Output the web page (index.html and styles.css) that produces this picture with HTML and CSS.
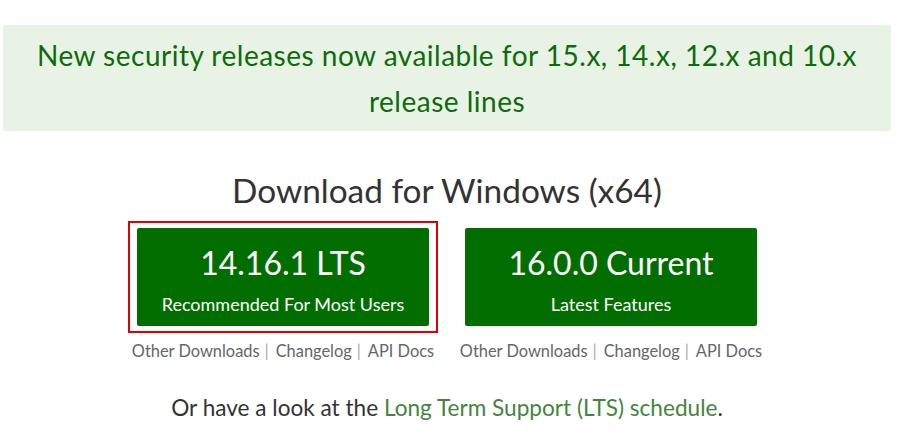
FILE: index.html
```html
<!DOCTYPE html>
<html>
<head>
<meta charset="utf-8">
<link rel="stylesheet" href="styles.css">
</head>
<body>
<div class="page">
  <div class="banner">New security releases now available for 15.x, 14.x, 12.x and 10.x release lines</div>
  <h2 class="title">Download for Windows (x64)</h2>
  <div class="downloads">
    <div class="col">
      <div class="frame">
        <a class="btn" href="#"><span class="ver">14.16.1 LTS</span><span class="sub">Recommended For Most Users</span></a>
      </div>
      <div class="links"><a href="#">Other Downloads</a><span class="sep">|</span><a href="#">Changelog</a><span class="sep">|</span><a href="#">API Docs</a></div>
    </div>
    <div class="col">
      <div class="frame plain">
        <a class="btn" href="#"><span class="ver">16.0.0 Current</span><span class="sub">Latest Features</span></a>
      </div>
      <div class="links"><a href="#">Other Downloads</a><span class="sep">|</span><a href="#">Changelog</a><span class="sep">|</span><a href="#">API Docs</a></div>
    </div>
  </div>
  <p class="lts">Or have a look at the <a href="#">Long Term Support (LTS) schedule</a>.</p>
</div>
</body>
</html>
```
FILE: styles.css
```css
html, body { margin: 0; padding: 0; background: #fff; }
body { font-family: Lato, "Noto Sans", sans-serif; color: #333; }
.page { width: 888px; margin-left: 3px; padding-top: 25px; }
.banner {
  background: #e8f3e6;
  color: #0d6b0b;
  text-align: center;
  font-size: 28px;
  letter-spacing: 0.5px;
  line-height: 46px;
  padding: 7px 20px 7px;
  border-radius: 2px;
}
.title {
  margin: 37px 0 0;
  text-align: center;
  font-weight: 400;
  font-size: 33.4px;
  line-height: 44px;
  color: #333;
}
.downloads { display: flex; justify-content: center; gap: 18px; margin-top: 9px; }
.col { display: flex; flex-direction: column; align-items: center; }
.frame { border: 2px solid #e30000; padding: 5px 7px; }
.frame.plain { border-color: transparent; }
.btn {
  display: flex; flex-direction: column; align-items: center;
  width: 292px; height: 98px; box-sizing: border-box;
  background: #026e00; color: #fff; text-decoration: none; border-radius: 2px;
  padding-top: 15px;
}
.ver { font-size: 32px; line-height: 40px; }
.sub { font-size: 18px; line-height: 24px; margin-top: 9px; }
.links { margin-top: 7px; font-size: 16.4px; line-height: 22px; color: #999; }
.links a { color: #666; text-decoration: none; }
.sep { margin: 0 7px 0 5px; color: #aaa; }
.lts { margin: 32px 0 0; text-align: center; font-size: 22.6px; line-height: 28px; color: #333; }
.lts a { color: #43853d; text-decoration: none; }
```
